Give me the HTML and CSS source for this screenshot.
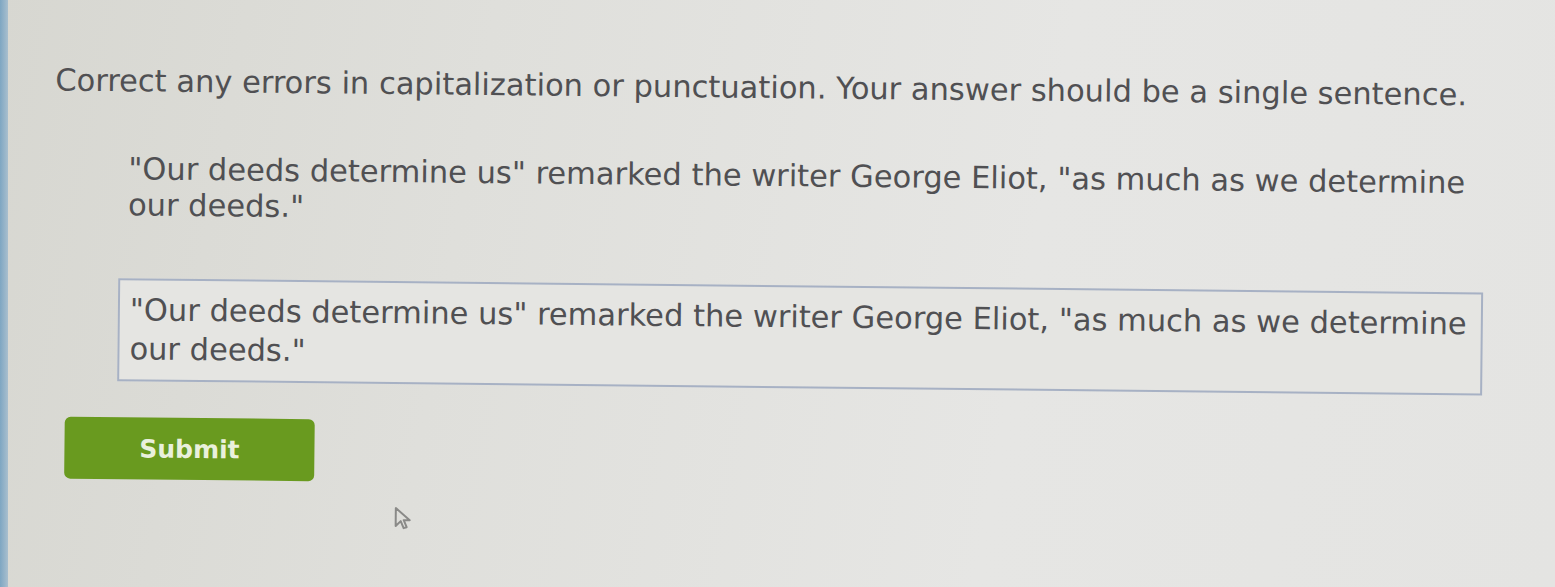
FILE: index.html
```html
<!DOCTYPE html>
<html>
<head>
<meta charset="utf-8">
<link rel="stylesheet" href="styles.css">
</head>
<body>
<div class="page">
  <div class="strip"></div>
  <main class="content">
    <p class="instruction">Correct any errors in capitalization or punctuation. Your answer should be a single sentence.</p>
    <p class="quote">"Our deeds determine us" remarked the writer George Eliot, "as much as we determine our deeds."</p>
    <div class="answer">"Our deeds determine us" remarked the writer George Eliot, "as much as we determine our deeds."</div>
    <button class="submit">Submit</button>
    <div class="cursor-row">
      <svg class="cursor" width="20" height="26" viewBox="0 0 20 26"><path d="M2 2 L2 20 L7 15 L10 22 L13 21 L10 14 L16 14 Z" fill="none" stroke="#8a8a88" stroke-width="2" stroke-linejoin="round"/></svg>
    </div>
  </main>
</div>
</body>
</html>
```

FILE: styles.css
```css
html, body {
  margin: 0;
  padding: 0;
  height: 100%;
}
body {
  background: linear-gradient(100deg, #d7d7d1 0%, #dfdfdb 30%, #e6e6e4 65%, #e4e4e2 100%);
  font-family: "DejaVu Sans", Verdana, sans-serif;
  color: #505053;
  overflow: hidden;
}
.page {
  display: flex;
  height: 100%;
}
.strip {
  width: 8px;
  flex: none;
  background: linear-gradient(90deg, #7ea6c2, #a9bfce);
}
.content {
  flex: 1;
  padding: 60px 0 0 45px;
  transform: rotate(0.6deg);
  transform-origin: 0 300px;
}
.instruction {
  margin: 0;
  font-size: 30.5px;
  line-height: 40px;
  white-space: nowrap;
}
.quote {
  margin: 50px 0 0 74px;
  width: 1380px;
  font-size: 30.5px;
  line-height: 36px;
}
.answer {
  margin: 55px 0 0 65px;
  width: 1365px;
  box-sizing: border-box;
  height: 103px;
  padding: 10px 10px;
  border: 2px solid #a7b1c4;
  font-size: 30.5px;
  line-height: 39px;
  background: #e5e5e2;
}
.submit {
  display: block;
  margin: 36px 0 0 13px;
  width: 250px;
  height: 62px;
  border: none;
  border-radius: 6px;
  background: #699a1f;
  color: #e9f0dc;
  font-family: "DejaVu Sans", Verdana, sans-serif;
  font-size: 25px;
  font-weight: bold;
  padding: 0;
}
.cursor-row {
  margin: 24px 0 0 343px;
}
.cursor {
  display: block;
}
```
